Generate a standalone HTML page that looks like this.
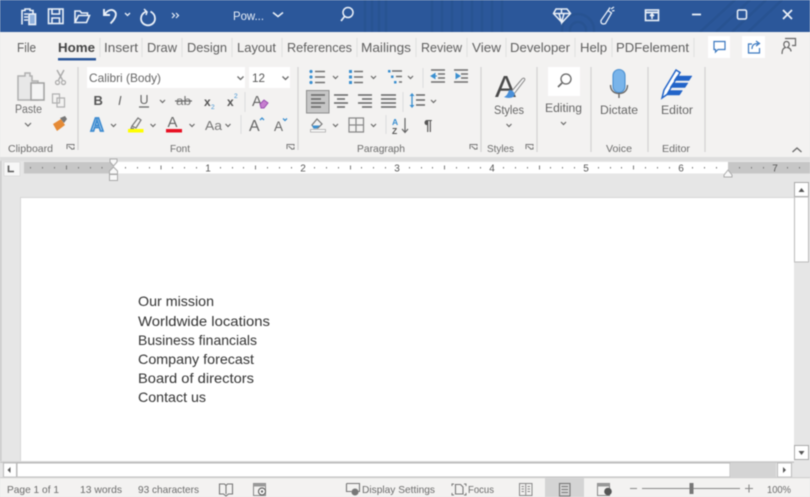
<!DOCTYPE html>
<html><head><meta charset="utf-8"><style>
html,body{margin:0;padding:0;background:#e6e6e6;width:810px;height:497px;overflow:hidden}
svg{display:block;filter:blur(.5px)}
text{font-family:"Liberation Sans",sans-serif;fill:#555}
.t{font-size:13px;fill:#5f5f5f}
.g{font-size:10.5px;fill:#6c6c6c}
.s{font-size:10.5px;fill:#6c6c6c}
.d{font-size:14px;fill:#333}
.w{fill:none;stroke:#eaf0f8;stroke-width:1.6}
.k{fill:none;stroke:#6a6a6a;stroke-width:1.3}
.c{fill:none;stroke:#6a6a6a;stroke-width:1.2}
.l{stroke:#707070;stroke-width:1.4}
</style></head><body>
<svg width="810" height="497" viewBox="0 0 810 497" xmlns="http://www.w3.org/2000/svg">
<rect width="810" height="497" fill="#e6e6e6"/>
<!-- title bar -->
<rect width="810" height="32" fill="#2b579a"/>
<g fill="none" stroke="#285392" stroke-width="2.500">
<path d="M365 0V32M372 0V32M379 0V32M386 0V32M432 0V32M442 0V32M452 0V32M462 0V32M472 0V32M482 0V32M492 0V32M502 0V32"/>
<circle cx="578" cy="30" r="16"/><circle cx="578" cy="30" r="8"/>
<path d="M700 32L735 0M716 32L750 0M732 32L766 0M748 32L782 0"/>
</g>
<!-- QAT icons -->
<g class="w">
<path d="M22 24.500V10.500h3V9h5v1.500h3v3"/><path d="M24 14h4M24 17h4M24 20h4"/><rect x="29" y="14" width="6.500" height="10.500" fill="#8fb0dc" stroke="#eaf0f8"/>
<rect x="48.500" y="9" width="14.500" height="14.500"/><path d="M52 9v5h7.500V9M52 23.500V18h7.500v5.500"/>
<path d="M75 22.500V11h5l1.500 2h6v2.500M75 22.500h11.500l3-7H78.500z"/>
<path d="M104 9v6h6" stroke-width="1.900"/><path d="M104.500 15c2-4 6-6 9-4.500 4 2 3 7-3 13" stroke-width="1.900"/>
<path d="M125 13l2.500 2.500 2.500-2.500" stroke-width="1.300"/>
<path d="M146 11.500c-3 1.500-5 4-5 7 0 3.800 3 6.800 7 6.800s7-3 7-6.800c0-3-1.700-5.500-4.500-7" stroke-width="1.800"/><path d="M144 9l3 3-1 3" stroke-width="1.500"/>
<path d="M172 13l2.500 2.500-2.500 2.500M176 13l2.500 2.500-2.500 2.500" stroke-width="1.200"/>
<path d="M273 12.500l5 4 5-4" stroke-width="1.500"/>
<circle cx="348" cy="12.500" r="5" stroke-width="1.500"/><path d="M344.500 16.500l-3.500 4.500" stroke-width="1.700"/>
<path d="M556 9h11l3.500 4.500-8.500 9-8.500-9zM553.500 13.500h17M559 13.500l2.500 9 2.500-9M561.500 9v4.500" stroke-width="1.500"/>
<path d="M601 20.500l7-10 3.500 2.500-6 10.500c-2.500 1-5 .5-4.500-3zM608 10.500l2-3M611 9l3-2M612 11l2.500-.5" stroke-width="1.300"/>
<rect x="645.500" y="10" width="13" height="10.500"/><path d="M645.500 12.500h13" stroke-width="1.800"/><path d="M652 19v-5M650 16l2-2 2 2"/>
<path d="M692 14.500h9" stroke-width="1.800"/>
<rect x="737.500" y="10" width="9" height="9" rx="1.500" stroke-width="1.500"/>
<path d="M783 10l9 9M792 10l-9 9" stroke-width="1.800"/>
</g>
<text x="233" y="20" font-size="11.500" textLength="31" lengthAdjust="spacingAndGlyphs" style="fill:#eaf0f8">Pow...</text>
<!-- tabs -->
<rect y="32" width="810" height="125" fill="#f3f2f1"/>
<g stroke="#e0e0e0" stroke-width="1"><path d="M100 38V57M142 38V57M182 38V57M232 38V57M282 38V57M357 38V57M416 38V57M467 38V57M506 38V57M575 38V57M612 38V57M694 38V57"/></g>
<text class="t" x="17" y="52" textLength="19" lengthAdjust="spacingAndGlyphs">File</text>
<text class="t" x="58" y="52" textLength="37" lengthAdjust="spacingAndGlyphs" font-weight="bold" style="fill:#444">Home</text>
<rect x="58" y="58" width="38" height="2.500" fill="#2b579a"/>
<text class="t" x="104" y="52" textLength="34" lengthAdjust="spacingAndGlyphs">Insert</text>
<text class="t" x="147" y="52" textLength="30" lengthAdjust="spacingAndGlyphs">Draw</text>
<text class="t" x="187" y="52" textLength="40" lengthAdjust="spacingAndGlyphs">Design</text>
<text class="t" x="237" y="52" textLength="39" lengthAdjust="spacingAndGlyphs">Layout</text>
<text class="t" x="287" y="52" textLength="65" lengthAdjust="spacingAndGlyphs">References</text>
<text class="t" x="361" y="52" textLength="50" lengthAdjust="spacingAndGlyphs">Mailings</text>
<text class="t" x="421" y="52" textLength="41" lengthAdjust="spacingAndGlyphs">Review</text>
<text class="t" x="472" y="52" textLength="29" lengthAdjust="spacingAndGlyphs">View</text>
<text class="t" x="510" y="52" textLength="60" lengthAdjust="spacingAndGlyphs">Developer</text>
<text class="t" x="580" y="52" textLength="27" lengthAdjust="spacingAndGlyphs">Help</text>
<text class="t" x="616" y="52" textLength="73" lengthAdjust="spacingAndGlyphs">PDFelement</text>
<!-- right tab icons -->
<rect x="708" y="36" width="22" height="22" fill="#fff"/><rect x="742" y="36" width="23" height="22" fill="#fff"/>
<path d="M714 41.500h11v8h-7l-2.500 2.500v-2.500h-1.500z" fill="none" stroke="#3a78c0" stroke-width="1.200"/>
<path d="M752 44h-3.500v9h11v-5M752 49c0-4 2-5.500 6-5.500M756 41l3.500 2.500-3.500 2.500" fill="none" stroke="#3a78c0" stroke-width="1.200"/>
<path d="M785 38.500h10.500v7H792M782 54c0-4 1-6 3.500-6.500-3-2.500-1.500-6 1-6s4 3.500 1 6c2 .5 3.500 2 3.500 4" fill="none" stroke="#666" stroke-width="1.200"/>
<!-- ribbon separators -->
<g stroke="#d2d2d2" stroke-width="1.200"><path d="M78 67V150M298 67V150M481 67V152M537 67V152M591 67V152M648 67V152M705 67V152"/></g>
<g stroke="#dcdcdc"><path d="M245 92V112M241 115V134M403 92V112M423 68V88M386 115V134"/></g>
<!-- clipboard -->
<path d="M18 76h7v-3h5v3h2v5h6v19H18z" fill="#e8e8e8" stroke="#b0b0b0" stroke-width="1.500"/><rect x="31" y="83" width="13" height="17" fill="#f4f4f4" stroke="#a0a0a0" stroke-width="1.500"/>
<text class="s" x="15" y="113" textLength="27" lengthAdjust="spacingAndGlyphs" style="font-size:11.500px;fill:#707070">Paste</text>
<path d="M25 123l3 3 3-3" class="c"/>
<path d="M57 70l5.500 10M64 70l-5.500 10" fill="none" stroke="#aaa" stroke-width="1.400"/><circle cx="57.500" cy="82.500" r="2" fill="none" stroke="#aaa" stroke-width="1.200"/><circle cx="63.500" cy="82.500" r="2" fill="none" stroke="#aaa" stroke-width="1.200"/>
<path d="M52.500 94h7v9h-7zM57 98h7.500v9H57z" fill="#f3f2f1" stroke="#b0b0b0" stroke-width="1.200"/>
<path d="M53 124l8-5 4 6-8 6z" fill="#e58a35"/><path d="M60 118l5-2 2 3-3 4z" fill="#777"/>
<text class="g" x="8" y="152" textLength="45" lengthAdjust="spacingAndGlyphs">Clipboard</text>
<g id="launch" fill="none" stroke="#777" stroke-width="1"><path d="M67 149v-4.500h7v1.500M71 149h3v-2M68.500 146l4 3.500"/></g>
<!-- font combos -->
<rect x="87" y="67" width="158" height="21" fill="#fff"/><rect x="249" y="67" width="41" height="21" fill="#fff"/>
<text x="89" y="82" font-size="12" textLength="72" lengthAdjust="spacingAndGlyphs" style="fill:#666">Calibri (Body)</text>
<text x="252" y="82" font-size="12" textLength="13" lengthAdjust="spacingAndGlyphs" style="fill:#555">12</text>
<path d="M237.500 76.500l3 3 3-3M282.500 76.500l3 3 3-3" class="k"/>
<!-- font row 2 -->
<text x="93.500" y="105" font-size="13" font-weight="bold" style="fill:#555">B</text>
<text x="118" y="105" font-size="13" font-style="italic" style="fill:#666">I</text>
<text x="139.500" y="104" font-size="12.500" style="fill:#666">U</text><path d="M139 107h10" class="k"/>
<path d="M160 100l2.500 2.500 2.500-2.500" class="c"/>
<text x="176" y="105" font-size="11.500" textLength="15" lengthAdjust="spacingAndGlyphs" style="fill:#777">ab</text><path d="M175 101h17" class="k"/>
<text x="204" y="106" font-size="12" font-weight="bold" style="fill:#555">x</text><text x="211" y="109" font-size="6.500" style="fill:#3a8fd0">2</text>
<text x="227" y="106" font-size="12" font-weight="bold" style="fill:#555">x</text><text x="234" y="98" font-size="6.500" style="fill:#3a8fd0">2</text>
<text x="252" y="106" font-size="15" style="fill:#666">A</text><path d="M260 104l4-4 4 3-4 5h-3z" fill="#c77fd0" stroke="#9a4fb0"/>
<!-- font row 3 -->
<text x="90.500" y="131" font-size="18" font-weight="bold" style="fill:#cfe3f6;stroke:#3d8bd0;stroke-width:1.700px">A</text>
<path d="M111 124l2.500 2.500 2.500-2.500M150.500 124l2.500 2.500 2.500-2.500M189.500 124l2.500 2.500 2.500-2.500M225.500 124l2.500 2.500 2.500-2.500" class="c"/>
<path d="M132 126l6-8 3 2-5 8zM132 126l-1 2.500h3" fill="none" stroke="#777" stroke-width="1.200"/><rect x="128" y="129" width="15.500" height="3.500" fill="#ffff00"/>
<text x="167.500" y="127" font-size="15" style="fill:#666">A</text><rect x="166" y="129" width="16" height="3.500" fill="#e81123"/>
<text x="205" y="130" font-size="13" textLength="17" lengthAdjust="spacingAndGlyphs" style="fill:#777">Aa</text>
<text x="249" y="131" font-size="16" style="fill:#666">A</text><path d="M260 120l2-2 2 2" fill="none" stroke="#3a8fd0" stroke-width="1.300"/>
<text x="274" y="131" font-size="13.500" style="fill:#666">A</text><path d="M283 118.500l2 2 2-2" fill="none" stroke="#3a8fd0" stroke-width="1.300"/>
<text class="g" x="170" y="152" textLength="20" lengthAdjust="spacingAndGlyphs">Font</text>
<use href="#launch" x="220"/>
<!-- paragraph row 1 -->
<g fill="#3a8fd0"><circle cx="311" cy="71.500" r="1.600"/><circle cx="311" cy="77" r="1.600"/><circle cx="311" cy="82.500" r="1.600"/>
<rect x="349" y="70" width="3" height="3"/><rect x="349" y="75.500" width="3" height="3"/><rect x="349" y="81" width="3" height="3"/>
<rect x="388" y="70" width="2.500" height="2.500"/><rect x="391" y="75.500" width="2.500" height="2.500"/><rect x="394" y="81" width="2.500" height="2.500"/></g>
<g class="l" fill="none"><path d="M315 71.500h10M315 77h10M315 82.500h10M354 71.500h9M354 77h9M354 82.500h9M392 71h10M396 76.500h6M399 82h3"/></g>
<path d="M333 76l2.500 2.500 2.500-2.500M371 76l2.500 2.500 2.500-2.500M408 76l2.500 2.500 2.500-2.500" class="c"/>
<g class="l" fill="none"><path d="M431 70h14M438 74h7M438 78h7M431 82h14M454 70h14M461 74h7M461 78h7M454 82h14"/></g>
<path d="M431 76l4-2.500v5zM437 76h-3" fill="#3a8fd0" stroke="#3a8fd0"/><path d="M460 76l-4-2.500v5z" fill="#3a8fd0" stroke="#3a8fd0"/>
<!-- paragraph row 2 -->
<rect x="306.500" y="90.500" width="22.500" height="22.500" fill="#c6c6c6" stroke="#8e8e8e"/>
<g class="l" fill="none" style="stroke:#666">
<path d="M311 95h14M311 99h10M311 103h14M311 107h10"/>
<path d="M334 95h14M337 99h8M334 103h14M337 107h8"/>
<path d="M358 95h14M362 99h10M358 103h14M362 107h10"/>
<path d="M381 95h15M381 99h15M381 103h15M381 107h15"/>
<path d="M416 95h9M416 100h9M416 105h9"/></g>
<path d="M412 95v11" stroke="#3a8fd0" stroke-width="1.300"/><path d="M409.500 96l2.500-3 2.500 3zM409.500 105l2.500 3 2.500-3z" fill="#3a8fd0"/>
<path d="M431 100l2.500 2.500 2.500-2.500" class="c"/>
<!-- paragraph row 3 -->
<path d="M312 125l5-6 5 5-4 4h-4z" fill="none" stroke="#777" stroke-width="1.200"/><path d="M312 125.500h8l-3.500 3h-3z" fill="#3a8fd0"/><rect x="310.500" y="129.500" width="15" height="2.500" fill="#fff" stroke="#aaa" stroke-width=".8"/>
<path d="M333 124l2.500 2.500 2.500-2.500M371 124l2.500 2.500 2.500-2.500" class="c"/>
<path d="M349 118h14.500v14H349zM356 118v14M349 125h14.500" fill="none" stroke="#888" stroke-width="1.200"/>
<text x="392" y="125" font-size="8.500" font-weight="bold" style="fill:#3a8fd0">A</text><text x="392" y="134" font-size="8.500" font-weight="bold" style="fill:#555">Z</text>
<path d="M405 118v14M402 129l3 3.500 3-3.500" fill="none" stroke="#666" stroke-width="1.200"/>
<text x="424" y="130" font-size="15" font-weight="bold" style="fill:#555">¶</text>
<text class="g" x="357" y="152" textLength="48" lengthAdjust="spacingAndGlyphs">Paragraph</text>
<use href="#launch" x="403"/>
<!-- styles -->
<text x="495" y="97" font-size="31" textLength="21" lengthAdjust="spacingAndGlyphs" style="fill:#4a4a4a">A</text>
<path d="M511 92l11-13c2-2 4 0 2 2l-10 13z" fill="#f5f5f5" stroke="#888" stroke-width="1"/>
<path d="M509 90c3 0 6 2 5.500 5-1 3.500-7 3.500-10.500 2 2.500-1 4-3.500 5-7z" fill="#4a90d9"/>
<text x="494" y="114" font-size="11.500" textLength="30" lengthAdjust="spacingAndGlyphs" style="fill:#666">Styles</text>
<path d="M506.500 124l2.500 2.500 2.500-2.500" class="c"/>
<text class="g" x="487" y="152" textLength="27" lengthAdjust="spacingAndGlyphs">Styles</text>
<use href="#launch" x="459"/>
<!-- editing -->
<rect x="548" y="67" width="32" height="29" fill="#fff"/>
<circle cx="566" cy="79" r="5" fill="none" stroke="#666" stroke-width="1.300"/><path d="M562 83l-4 4" stroke="#666" stroke-width="1.600"/>
<text x="545" y="112" font-size="11.500" textLength="37" lengthAdjust="spacingAndGlyphs" style="fill:#666">Editing</text>
<path d="M561 122l2.500 2.500 2.500-2.500" class="c"/>
<!-- dictate -->
<rect x="613" y="69.500" width="12" height="23" rx="6" fill="#79b4ea" stroke="#4a8fd0" stroke-width="1.100"/>
<path d="M610.500 85c0 6 4 8.500 8.500 8.500s8.500-2.500 8.500-8.500M619 93.500V98" fill="none" stroke="#666" stroke-width="1.400"/>
<text x="600" y="114" font-size="11.500" textLength="38" lengthAdjust="spacingAndGlyphs" style="fill:#666">Dictate</text>
<text class="g" x="606" y="152" textLength="26" lengthAdjust="spacingAndGlyphs">Voice</text>
<!-- editor -->
<path d="M662 98l2-8 12-20 4 2.500-13 22z" fill="#fff" stroke="#2264c8" stroke-width="1.500"/>
<path d="M676 70l5 2.500M677 76h15l-3 4.500H674zM673 83h15l-3 4.500h-15zM669 90.500h13.500l-3 4.500h-13z" fill="#2264c8" stroke="#2264c8" stroke-width=".5"/>
<text x="661" y="114" font-size="11.500" textLength="32" lengthAdjust="spacingAndGlyphs" style="fill:#666">Editor</text>
<text class="g" x="662" y="152" textLength="28" lengthAdjust="spacingAndGlyphs">Editor</text>
<path d="M792.500 152l4.500-4 4.500 4" class="k"/>
<!-- ruler -->
<rect y="157" width="810" height="40" fill="#e6e6e6"/>
<rect y="157" width="810" height="4" fill="#dedede"/>
<rect x="24" y="162" width="89" height="11.500" fill="#c6c6c6"/>
<rect x="113" y="162" width="615" height="11.500" fill="#fff"/>
<rect x="728" y="162" width="82" height="11.500" fill="#c6c6c6"/>
<rect x="4" y="162" width="16" height="14" fill="#f7f7f7" stroke="#ddd"/>
<path d="M8.500 165.500v6h5.500" fill="none" stroke="#555" stroke-width="1.600"/>
<g fill="#777">
<rect x="30" y="167" width="1" height="1.500"/><rect x="42" y="167" width="1" height="1.500"/><rect x="54" y="167" width="1" height="1.500"/><rect x="66" y="165.500" width="1" height="4"/><rect x="78" y="167" width="1" height="1.500"/><rect x="90" y="167" width="1" height="1.500"/><rect x="101.500" y="167" width="1" height="1.500"/>
<rect x="125" y="167" width="1" height="1.500"/><rect x="137" y="167" width="1" height="1.500"/><rect x="149" y="167" width="1" height="1.500"/><rect x="160.500" y="165.500" width="1" height="4"/><rect x="172" y="167" width="1" height="1.500"/><rect x="184" y="167" width="1" height="1.500"/><rect x="196" y="167" width="1" height="1.500"/>
<rect x="220" y="167" width="1" height="1.500"/><rect x="232" y="167" width="1" height="1.500"/><rect x="243" y="167" width="1" height="1.500"/><rect x="255" y="165.500" width="1" height="4"/><rect x="267" y="167" width="1" height="1.500"/><rect x="279" y="167" width="1" height="1.500"/><rect x="291" y="167" width="1" height="1.500"/>
<rect x="314" y="167" width="1" height="1.500"/><rect x="326" y="167" width="1" height="1.500"/><rect x="338" y="167" width="1" height="1.500"/><rect x="350" y="165.500" width="1" height="4"/><rect x="361" y="167" width="1" height="1.500"/><rect x="373" y="167" width="1" height="1.500"/><rect x="385" y="167" width="1" height="1.500"/>
<rect x="409" y="167" width="1" height="1.500"/><rect x="421" y="167" width="1" height="1.500"/><rect x="432" y="167" width="1" height="1.500"/><rect x="444" y="165.500" width="1" height="4"/><rect x="456" y="167" width="1" height="1.500"/><rect x="468" y="167" width="1" height="1.500"/><rect x="480" y="167" width="1" height="1.500"/>
<rect x="503" y="167" width="1" height="1.500"/><rect x="515" y="167" width="1" height="1.500"/><rect x="527" y="167" width="1" height="1.500"/><rect x="539" y="165.500" width="1" height="4"/><rect x="550" y="167" width="1" height="1.500"/><rect x="562" y="167" width="1" height="1.500"/><rect x="574" y="167" width="1" height="1.500"/>
<rect x="598" y="167" width="1" height="1.500"/><rect x="610" y="167" width="1" height="1.500"/><rect x="621" y="167" width="1" height="1.500"/><rect x="633" y="165.500" width="1" height="4"/><rect x="645" y="167" width="1" height="1.500"/><rect x="657" y="167" width="1" height="1.500"/><rect x="669" y="167" width="1" height="1.500"/>
<rect x="692" y="167" width="1" height="1.500"/><rect x="704" y="167" width="1" height="1.500"/><rect x="716" y="167" width="1" height="1.500"/><rect x="739" y="167" width="1" height="1.500"/><rect x="751" y="167" width="1" height="1.500"/><rect x="763" y="167" width="1" height="1.500"/><rect x="787" y="167" width="1" height="1.500"/><rect x="799" y="167" width="1" height="1.500"/>
</g>
<g><text x="208" y="171.500" font-size="10" text-anchor="middle" style="fill:#555">1</text><text x="303" y="171.500" font-size="10" text-anchor="middle" style="fill:#555">2</text><text x="397" y="171.500" font-size="10" text-anchor="middle" style="fill:#555">3</text><text x="492" y="171.500" font-size="10" text-anchor="middle" style="fill:#555">4</text><text x="586" y="171.500" font-size="10" text-anchor="middle" style="fill:#555">5</text><text x="681" y="171.500" font-size="10" text-anchor="middle" style="fill:#555">6</text><text x="775" y="171.500" font-size="10" text-anchor="middle" style="fill:#555">7</text></g>
<path d="M110 159h7v3l-3.500 4-3.500-4zM113.500 167l4 4v3h-8v-3zM109.500 174.500h8v6h-8z" fill="#f8f8f8" stroke="#aaa"/>
<path d="M724 175l4-5 4 5v2h-8z" fill="#f8f8f8" stroke="#aaa"/>
<!-- document -->
<rect x="0" y="161" width="1.500" height="300" fill="#c8c8c8"/>
<rect x="20" y="197" width="774" height="265" fill="#fff"/>
<path d="M20 197.500H794M20.500 197V462" stroke="#d6d6d6"/>
<text class="d" x="138" y="306" textLength="76" lengthAdjust="spacingAndGlyphs">Our mission</text>
<text class="d" x="138" y="326" textLength="132" lengthAdjust="spacingAndGlyphs">Worldwide locations</text>
<text class="d" x="138" y="345" textLength="119" lengthAdjust="spacingAndGlyphs">Business financials</text>
<text class="d" x="138" y="364" textLength="116" lengthAdjust="spacingAndGlyphs">Company forecast</text>
<text class="d" x="138" y="383" textLength="116" lengthAdjust="spacingAndGlyphs">Board of directors</text>
<text class="d" x="138" y="402" textLength="68" lengthAdjust="spacingAndGlyphs">Contact us</text>
<!-- v scrollbar -->
<rect x="794" y="181" width="16" height="281" fill="#e6e6e6"/>
<rect x="794.500" y="182.500" width="14" height="14" fill="#fff" stroke="#aaa"/>
<path d="M798.500 192l3-4 3 4z" fill="#555"/>
<rect x="794.500" y="197" width="14" height="65" fill="#fff" stroke="#bbb"/>
<rect x="794.500" y="445.500" width="14" height="14" fill="#fff" stroke="#aaa"/>
<path d="M798.500 451l3 4 3-4z" fill="#555"/>
<!-- h scrollbar -->
<rect y="461" width="810" height="17" fill="#e6e6e6"/>
<rect x="0" y="461.500" width="794" height="1.500" fill="#c8c8c8"/>
<rect x="3.500" y="463" width="13" height="14" fill="#fff" stroke="#bbb"/>
<path d="M10.500 467v6l-3-3z" fill="#555"/>
<rect x="17" y="463" width="713" height="14" fill="#fff" stroke="#b8b8b8"/>
<rect x="730" y="463" width="46" height="14" fill="#d4d4d4"/>
<rect x="777.500" y="463" width="14" height="14" fill="#fff" stroke="#bbb"/>
<path d="M783 467v6l3-3z" fill="#555"/>
<!-- status bar -->
<rect y="477" width="810" height="20" fill="#f3f2f1"/>
<rect y="477" width="810" height="1.200" fill="#d0d0d0"/>
<rect x="545" y="478" width="39" height="19" fill="#d4d4d4"/>
<text class="s" x="7" y="493" textLength="52" lengthAdjust="spacingAndGlyphs">Page 1 of 1</text>
<text class="s" x="80" y="493" textLength="42" lengthAdjust="spacingAndGlyphs">13 words</text>
<text class="s" x="138" y="493" textLength="61" lengthAdjust="spacingAndGlyphs">93 characters</text>
<path d="M219.500 484h5l1.500 1.500 1.500-1.500h5v10h-4l-2.500 2-2.500-2h-4zM226 485.500V494" fill="none" stroke="#777" stroke-width="1.100"/>
<rect x="253.500" y="483.500" width="12" height="12" fill="none" stroke="#888"/><rect x="253.500" y="483.500" width="12" height="3" fill="#999"/><circle cx="262" cy="491.500" r="3.500" fill="#fff" stroke="#666" stroke-width="1.200"/><circle cx="262" cy="491.500" r="1.200" fill="#666"/>
<text class="s" x="362" y="493" textLength="73" lengthAdjust="spacingAndGlyphs">Display Settings</text>
<path d="M346.500 483.500h13v8h-6M346.500 483.500v8h5" fill="none" stroke="#777" stroke-width="1.100"/><circle cx="355" cy="492" r="3.500" fill="#777"/>
<path d="M454 484h-2v2M464 484h2v2M452 493v2h2M466 493v2h-2" fill="none" stroke="#777"/><path d="M455.500 484.500h5l2.500 2.500v7h-7.500z" fill="none" stroke="#777" stroke-width="1.100"/>
<text class="s" x="468" y="493" textLength="26" lengthAdjust="spacingAndGlyphs">Focus</text>
<rect x="519.500" y="483.500" width="12.500" height="12" fill="none" stroke="#888"/><path d="M525.750 483.500v12M521.500 486.500h2.500M521.500 489h2.500M521.500 491.500h2.500M527.500 486.500h2.500M527.500 489h2.500M527.500 491.500h2.500" stroke="#888" fill="none"/>
<rect x="559.500" y="483.500" width="10.500" height="12.500" fill="none" stroke="#777" stroke-width="1.100"/><path d="M561.500 486.500h6.500M561.500 489.500h6.500M561.500 492.500h6.500" stroke="#777"/>
<rect x="597.500" y="483.500" width="12" height="12" fill="none" stroke="#888"/><rect x="597.500" y="483.500" width="12" height="3" fill="#999"/><circle cx="608" cy="491.500" r="3.800" fill="#555"/>
<path d="M630 488.500h7M642 488.500h98M745 488.500h8M749 484.500v8" stroke="#888" stroke-width="1.100" fill="none"/>
<rect x="689.500" y="483" width="4" height="11" fill="#777"/>
<text class="s" x="767" y="493" textLength="24" lengthAdjust="spacingAndGlyphs">100%</text>
</svg>
</body></html>
